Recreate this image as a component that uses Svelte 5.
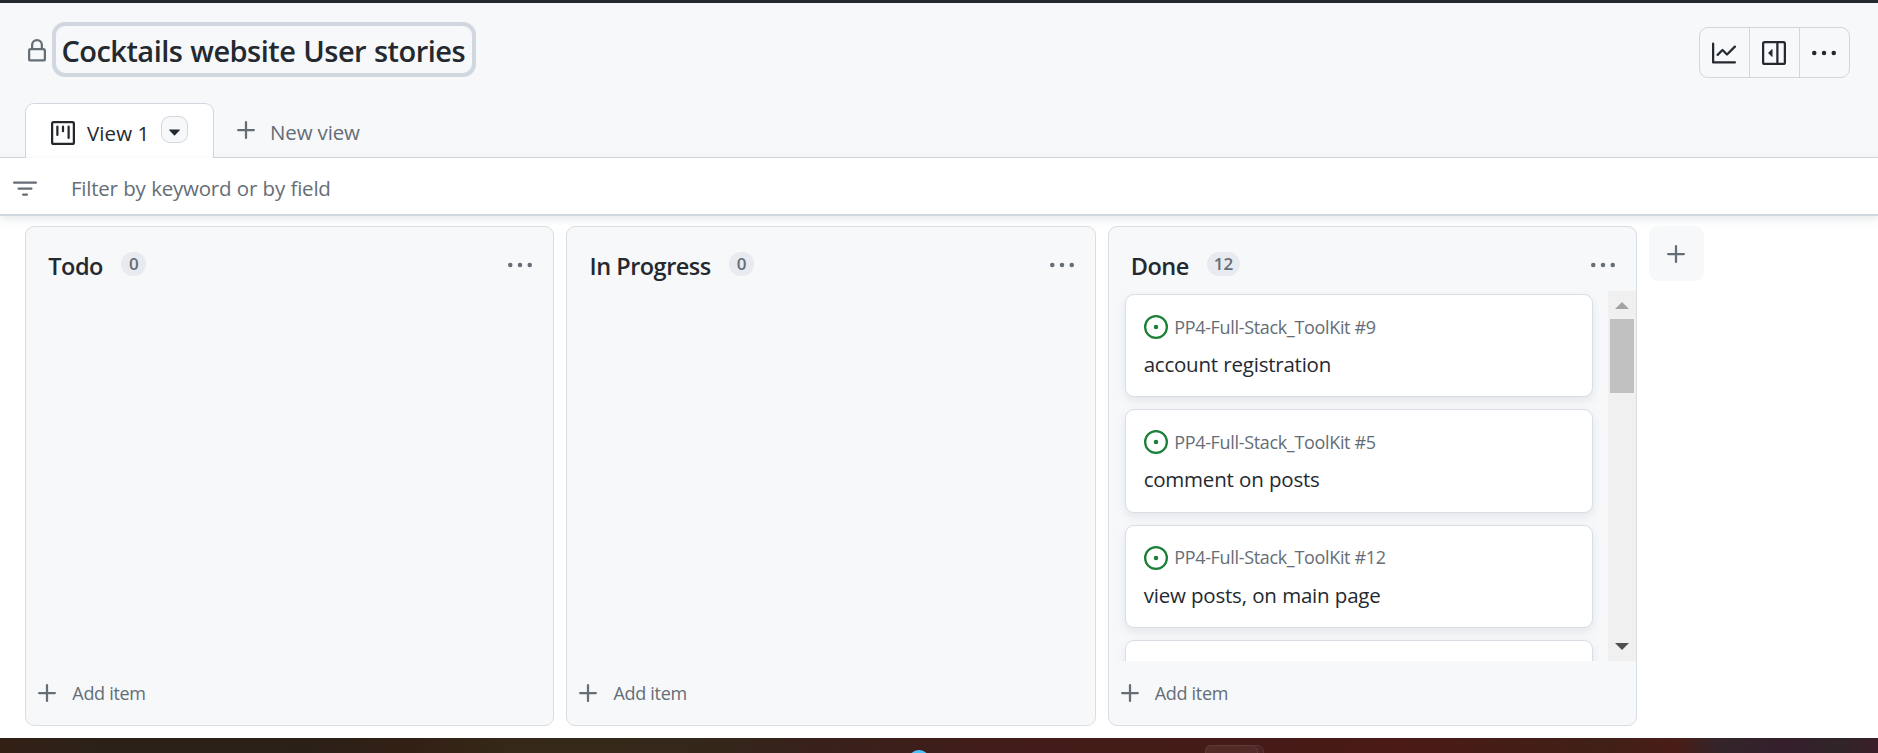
<script>
  const columns = [
    { name: 'Todo', count: 0, items: [] },
    { name: 'In Progress', count: 0, items: [] },
    {
      name: 'Done',
      count: 12,
      items: [
        { ref: 'PP4-Full-Stack_ToolKit #9', title: 'account registration' },
        { ref: 'PP4-Full-Stack_ToolKit #5', title: 'comment on posts' },
        { ref: 'PP4-Full-Stack_ToolKit #12', title: 'view posts, on main page' },
        { ref: '', title: '' }
      ]
    }
  ];
</script>

{#snippet plus()}
  <svg class="icon" viewBox="0 0 16 16"><path d="M8 2.75v10.5M2.75 8h10.5" fill="none" stroke="currentColor" stroke-width="1.5" stroke-linecap="round" /></svg>
{/snippet}

{#snippet kebab()}
  <svg class="icon" viewBox="0 0 16 16"><circle cx="1.5" cy="8" r="1.5" /><circle cx="8" cy="8" r="1.5" /><circle cx="14.5" cy="8" r="1.5" /></svg>
{/snippet}

<div class="page">
  <header>
    <div class="titlebar">
      <svg class="icon lock" viewBox="0 0 16 16"><path d="M4 4a4 4 0 0 1 8 0v2h.25c.966 0 1.75.784 1.75 1.75v5.5A1.75 1.75 0 0 1 12.25 15h-8.5A1.75 1.75 0 0 1 2 13.25v-5.5C2 6.784 2.784 6 3.75 6H4Zm8.25 3.5h-8.5a.25.25 0 0 0-.25.25v5.5c0 .138.112.25.25.25h8.5a.25.25 0 0 0 .25-.25v-5.5a.25.25 0 0 0-.25-.25ZM10.5 6V4a2.5 2.5 0 1 0-5 0v2Z" /></svg>
      <h1><span>Cocktails website User stories</span></h1>
      <div class="actions">
        <button aria-label="Insights">
          <svg class="icon" viewBox="0 0 16 16"><path d="M1.5 1.75V13.5h13.75a.75.75 0 0 1 0 1.5H.75a.75.75 0 0 1-.75-.75V1.75a.75.75 0 0 1 1.5 0Zm14.28 2.53-5.25 5.25a.75.75 0 0 1-1.06 0L7 7.06 4.28 9.78a.751.751 0 0 1-1.042-.018.751.751 0 0 1-.018-1.042l3.25-3.25a.75.75 0 0 1 1.06 0L10 7.94l4.72-4.72a.751.751 0 0 1 1.042.018.751.751 0 0 1 .018 1.042Z" /></svg>
        </button>
        <button aria-label="Details">
          <svg class="icon" viewBox="0 0 16 16"><rect x=".75" y=".75" width="14.5" height="14.5" rx="1" fill="none" stroke="currentColor" stroke-width="1.5" /><path d="M10.25 1v14" stroke="currentColor" stroke-width="1.5" /><path d="M7 5.6v4.8a.25.25 0 0 1-.43.18L4.18 8.18a.25.25 0 0 1 0-.36l2.39-2.4A.25.25 0 0 1 7 5.6Z" /></svg>
        </button>
        <button aria-label="More">{@render kebab()}</button>
      </div>
    </div>
    <nav>
      <div class="tab">
        <svg class="icon" viewBox="0 0 16 16"><rect x=".75" y=".75" width="14.5" height="14.5" rx="1" fill="none" stroke="currentColor" stroke-width="1.5" /><path d="M4.25 3.75v5.5M8 3.75v3M11.75 3.75v7.5" stroke="currentColor" stroke-width="1.5" stroke-linecap="round" /></svg>
        <span class="label">View 1</span>
        <button class="drop" aria-label="View options"><svg viewBox="0 0 12 7"><path d="M.7.3h10.6c.5 0 .7.5.4.8L6.5 6.4a.7.7 0 0 1-1 0L.3 1.1C0 .8.2.3.7.3Z" /></svg></button>
      </div>
      <div class="newview">{@render plus()}<span>New view</span></div>
    </nav>
  </header>

  <div class="filter">
    <svg class="icon" viewBox="0 0 16 16"><path d="M.75 3.75h14.5M3.75 7.75h8.5M6.75 11.75h2.5" stroke="currentColor" stroke-width="1.5" stroke-linecap="round" /></svg>
    <span>Filter by keyword or by field</span>
  </div>

  <main>
    {#each columns as col}
      <section>
        <div class="colhead">
          <h2>{col.name}</h2>
          <span class="count">{col.count}</span>
          <div class="menu">{@render kebab()}</div>
        </div>
        <div class="body">
          {#if col.items.length}
            <div class="cards">
              {#each col.items as item}
                <article>
                  {#if item.title}
                    <div class="meta">
                      <svg class="icon" viewBox="0 0 16 16"><circle cx="8" cy="8" r="7.25" fill="none" stroke="currentColor" stroke-width="1.5" /><circle cx="8" cy="8" r="1.5" /></svg>
                      <span>{item.ref}</span>
                    </div>
                    <p>{item.title}</p>
                  {/if}
                </article>
              {/each}
            </div>
            <div class="scroll">
              <svg class="up" viewBox="0 0 14 7"><path d="M7 0l7 7H0Z" /></svg>
              <div class="thumb"></div>
              <svg class="down" viewBox="0 0 14 7"><path d="M0 0h14L7 7Z" /></svg>
            </div>
          {/if}
        </div>
        <div class="add">{@render plus()}<span>Add item</span></div>
      </section>
    {/each}
    <button class="addcol" aria-label="Add column">{@render plus()}</button>
  </main>

  <footer><div class="dot"></div><div class="task back"></div><div class="task"></div></footer>
</div>

<style>
  :global(body) { margin: 0; background: #fff; }
  * { box-sizing: border-box; }
  .page {
    width: 1878px; height: 753px; overflow: hidden;
    display: flex; flex-direction: column;
    font-family: 'Open Sans', 'Noto Sans', sans-serif;
    font-size: 20.5px; color: #24292f; background: #fff;
  }
  .icon { width: 24px; height: 24px; fill: currentColor; display: block; flex: none; }
  span, h1, h2, p { white-space: nowrap; }
  button { padding: 0; margin: 0; border: 0; background: none; color: inherit; font: inherit; display: flex; align-items: center; justify-content: center; }
  header {
    height: 158px; flex: none; background: #f6f8fa;
    border-top: 3px solid #24292f; border-bottom: 1px solid #d0d7de;
    display: flex; flex-direction: column; justify-content: space-between;
  }
  .titlebar { display: flex; align-items: flex-start; padding: 19px 28px 0 25px; }
  .lock { color: #656d76; margin-top: 17px; }
  h1 {
    margin: 0 0 0 2.5px; width: 424px; height: 55px; border: 4px solid #d0d7de; border-radius: 13px;
    padding-left: 6px; font-size: 29px; font-weight: 600; line-height: 50px; letter-spacing: -0.54px; word-spacing: 1px;
  }
  .actions { margin: 5px 0 0 auto; width: 151px; height: 51px; display: flex; border: 1px solid #d0d7de; border-radius: 9px; }
  .actions button { width: 50px; padding-right: 1px; }
  .actions button:first-child { width: 49px; padding-right: 1px; }
  .actions button + button { border-left: 1px solid #d0d7de; }
  nav { display: flex; padding-left: 25px; height: 55px; margin-bottom: -1px; }
  .tab {
    width: 189px; height: 55px; border: 1px solid #d0d7de; border-bottom: 0; border-radius: 9px 9px 0 0;
    background: #fff; display: flex; align-items: flex-start; padding: 17px 0 0 25px;
  }
  .tab .label { margin-left: 12px; width: 74px; line-height: 24px; letter-spacing: 0.1px; }
  .drop { width: 27px; height: 27px; margin-top: -5px; border: 1px solid #d0d7de; border-radius: 9px; background: #f6f8fa; }
  .drop svg { width: 11px; height: 7px; margin-top: 6px; fill: #24292f; }
  .newview { display: flex; color: #656d76; padding: 15px 0 0 20px; }
  .newview span { margin-left: 12px; line-height: 24px; padding-top: 2px; letter-spacing: -0.15px; }
  .filter {
    height: 58px; flex: none; display: flex; align-items: center; padding: 4px 0 0 13px; color: #656d76;
    border-bottom: 2px solid #d0d7de; box-shadow: 0 3px 8px rgba(100, 110, 125, 0.16);
  }
  .filter .icon { margin-top: 2px; }
  .filter span { margin-left: 34px; letter-spacing: -0.24px; word-spacing: .5px; line-height: 30px; }
  main { display: flex; align-items: flex-start; gap: 12px; padding: 10px 0 0 25.3px; height: 522px; flex: none; }
  section { width: 529.2px; height: 500px; flex: none; border: 1px solid #d8dee4; border-radius: 9px; background: #f6f8fa; display: flex; flex-direction: column; }
  .colhead { display: flex; align-items: center; height: 64px; flex: none; padding: 12px 21px 0 22px; }
  h2 { margin: 0; font-size: 23.5px; line-height: 30px; font-weight: 600; letter-spacing: -0.5px; padding-top: 1px; }
  .count { margin-left: 18.5px; min-width: 25px; height: 24px; border-radius: 12px; background: #e7eaef; color: #656d76; font-size: 17px; font-weight: 600; line-height: 24px; text-align: center; padding: 0 6.5px; margin-top: -2px; }
  .menu { margin-left: auto; color: #656d76; }
  .body { height: 370px; flex: none; display: flex; overflow: hidden; }
  .cards { width: 499px; height: 370px; overflow: hidden; padding: 3px 15px 0 16px; display: flex; flex-direction: column; gap: 12px; }
  article { height: 103.3px; flex: none; background: #fff; border: 1px solid #d8dee4; border-radius: 9px; box-shadow: 0 4px 9px rgba(140, 149, 159, 0.17); padding: 20px 0 0 18px; }
  .meta { display: flex; align-items: center; height: 24px; color: #1a7f37; }
  .meta span { color: #656d76; font-size: 18px; margin-left: 6.5px; letter-spacing: -0.33px; line-height: 24px; margin-top: -1px; }
  p { margin: 10px 0 0; line-height: 30px; letter-spacing: -0.23px; word-spacing: .4px; }
  .scroll { width: 28px; height: 370px; background: #f0f0f0; display: flex; flex-direction: column; align-items: center; }
  .scroll svg { width: 14px; height: 7px; display: block; }
  .up { margin-top: 11px; fill: #a3a3a3; }
  .thumb { width: 24px; height: 74px; margin-top: 10px; background: #c1c1c1; }
  .down { margin: auto 0 11px; fill: #505050; }
  .add { display: flex; align-items: center; height: 64px; padding-left: 9px; color: #656d76; }
  .add span { margin-left: 13px; font-size: 18px; letter-spacing: -0.3px; }
  .addcol { width: 55px; height: 55px; border-radius: 9px; background: #f6f8fa; color: #656d76; flex: none; }
  footer {
    height: 15px; flex: none; position: relative; overflow: hidden;
    background: linear-gradient(90deg, #332015 0, #2b2118 110px, #2a2018 300px, #332015 410px, #352818 500px, #33281a 690px, #38221b 800px, #421c19 1000px, #451b17 1250px, #4b1a16 1400px, #402018 1600px, #4a1d17 1675px, #33252a 1720px, #351f2c 1790px, #302529 1840px, #3b1e29 1878px);
  }
  .dot { position: absolute; left: 908px; top: 12px; width: 22px; height: 22px; border-radius: 50%; background: #4cc2ff; }
  .task { position: absolute; left: 1205px; top: 7px; width: 53px; height: 20px; border-radius: 6px; background: #522b29; border: 1px solid #613936; }
  .back { width: 59px; background: #4b2523; border-color: #583130; }
</style>
